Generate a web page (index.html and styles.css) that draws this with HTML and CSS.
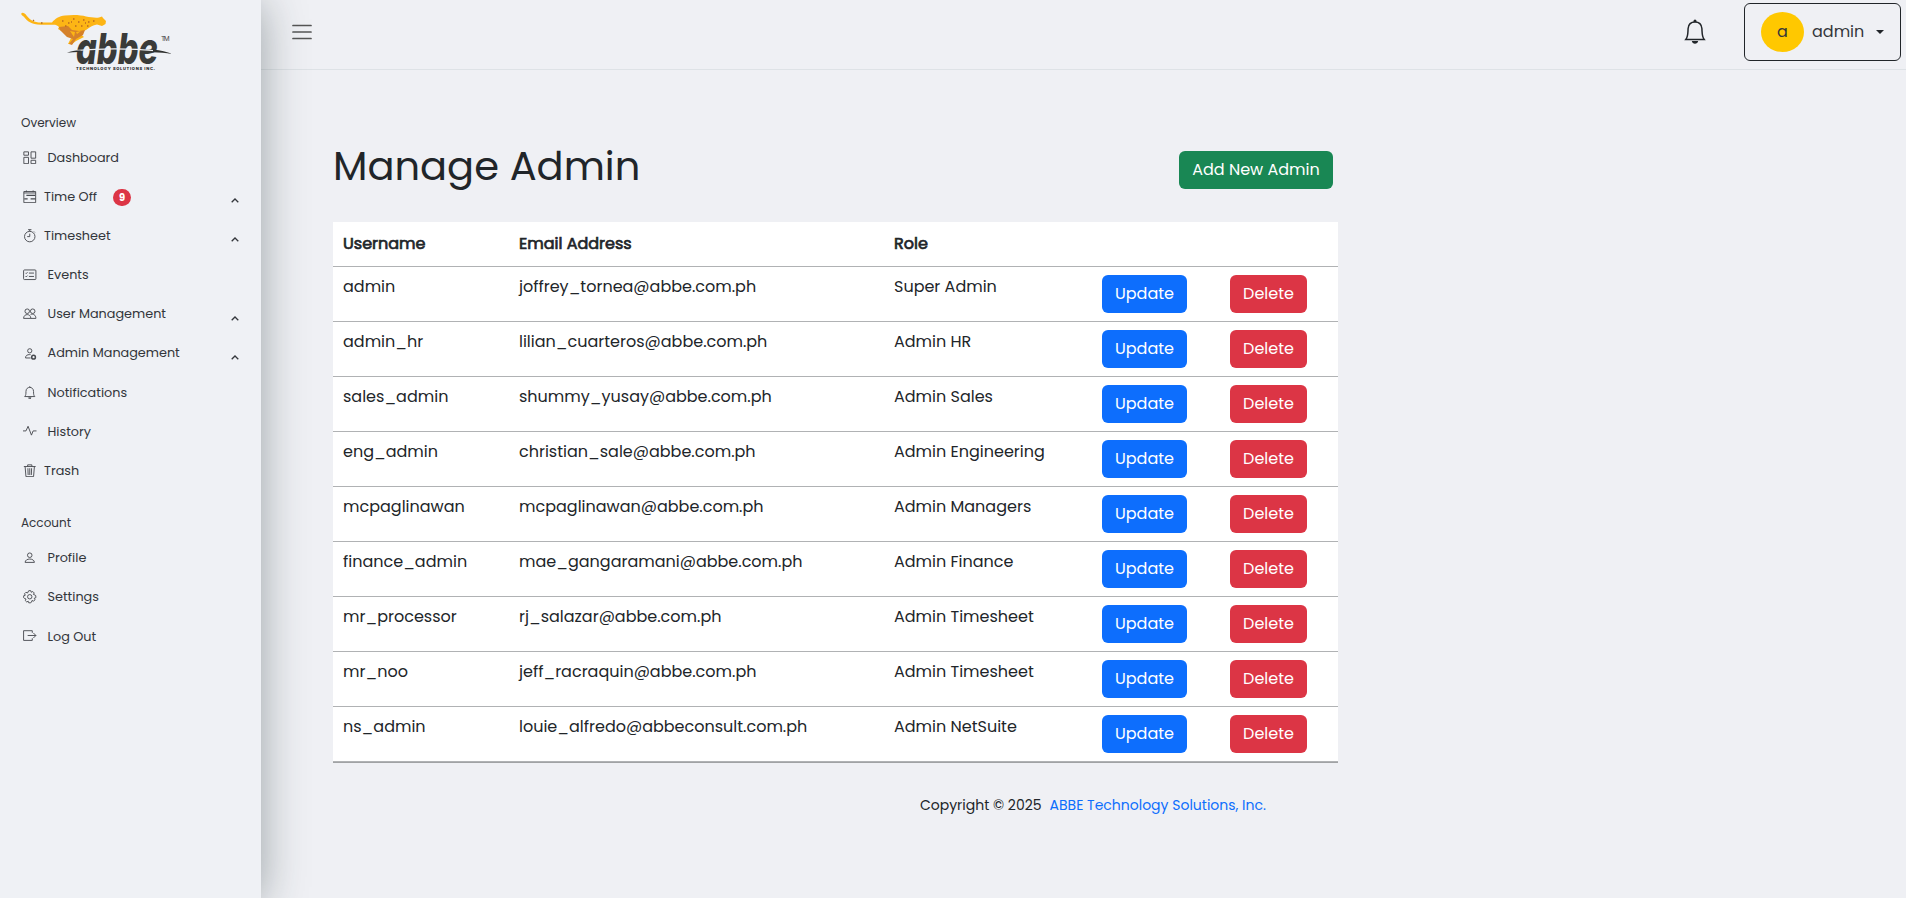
FILE: index.html
```html
<!DOCTYPE html>
<html lang="en">
<head>
<meta charset="utf-8">
<title>Manage Admin</title>
<link rel="stylesheet" href="styles.css">
</head>
<body>
<aside class="sidebar">
  <svg class="logo" viewBox="0 0 152 64" width="152" height="64">
    <path d="M.3 3.500C1 2 4 3 5.500 5.500C9 10 13 12.500 20 12.500H31C34 9 38 6 44 5.600C52 4.500 60 5 65 6.500C70 7.500 75 8 78 7.500L81 6.500L82 8L85 11L84.500 14L81 16L76 14.500C72 15 68 17.500 65 20L58 23L63 27L55 31L51 34L47 34L50 28L44 23L37 19L38 17C36 15 34 14.500 31 14.800H20C10 14.500 6 11 3.500 7.500C2 5.500 0 5.500 .3 3.500Z" fill="#fdb515"/>
    <path d="M38 17l9-1 4 4 7 1 6-1-2 5-7 4-4 6-3-1 4-5-6-2-7-7Z" fill="#d5812b"/>
    <path d="M49 21l5 1-1 5Zm6 1 5-1-4 3Z" fill="#fdb515"/>
    <path d="M41 11h1.500M47 13h1.500M52 9h1.500M57 12h1.500M62 10h1.500M67 12h1.500M60 16h1.500M54 16h1.500M44 16h1.500M66 16h1.500M72 11h1.500M50 12h1M64 13h1M20 13h1.500M12 10l1 1" stroke="#b96a22" stroke-width="1.300" fill="none"/>
    <text class="logo-word" x="55" y="53.500" textLength="82" lengthAdjust="spacingAndGlyphs">abbe</text>
    <path d="M54 40.500C85 38 112 38.500 138 41" stroke="#eff1f5" stroke-width="1.200" fill="none"/>
    <path d="M46 42.800C50 41 55 40.500 60 40.600L58 42C54 42 50 42.200 46 42.800ZM132 39.500C140 40.500 146 42 151 43.800C145 43.200 138 42.500 132 42.300Z" fill="#30312f"/>
    <text class="logo-tm" x="140" y="31" textLength="8.500">TM</text>
    <text class="logo-sub" x="55" y="60" textLength="79">TECHNOLOGY SOLUTIONS INC.</text>
  </svg>
  <h6 class="group">Overview</h6>
  <nav class="menu">
    <a class="item"><svg class="ico" viewBox="0 0 16 16"><path d="M1 1h5.500v4H1zM1 7.500h5.500V15H1zM9.500 1H15v7.500H9.500zM9.500 11H15v4H9.500z"/></svg><span>Dashboard</span></a>
    <a class="item near"><svg class="ico" viewBox="0 0 16 16"><path d="M1 1.800h14V15H1zM1 3.500h14M4 .5v2M12 .5v2"/><path d="M4 6.500h10.500M9 10.500h6M1.500 10.500h4" stroke-width="1.500"/></svg><span>Time Off</span><b class="badge">9</b><svg class="chev" viewBox="0 0 8 5"><path d="M.7 4.300 4 1l3.300 3.300"/></svg></a>
    <a class="item near"><svg class="ico" viewBox="0 0 16 16"><circle cx="8" cy="9" r="6.200"/><path d="M8 5.500V9H5M8 .8v2M6 .8h4M13 3l1 1"/></svg><span>Timesheet</span><svg class="chev" viewBox="0 0 8 5"><path d="M.7 4.300 4 1l3.300 3.300"/></svg></a>
    <a class="item"><svg class="ico" viewBox="0 0 16 16"><rect x=".7" y="2.300" width="14.600" height="11.400" rx="1"/><path d="M7 6h6M7 10h6M3 5.800l.8.8L5.300 5M3 9.800l.8.8L5.300 9"/></svg><span>Events</span></a>
    <a class="item"><svg class="ico" viewBox="0 0 16 16"><circle cx="5" cy="5" r="2.700"/><circle cx="11.500" cy="5" r="2.700"/><path d="M.7 13.500c0-6 8.600-6 8.600 0zM9 9c3-1.500 6.300.5 6.300 4.500h-6"/></svg><span>User Management</span><svg class="chev" viewBox="0 0 8 5"><path d="M.7 4.300 4 1l3.300 3.300"/></svg></a>
    <a class="item"><svg class="ico" viewBox="0 0 16 16"><circle cx="8" cy="4.500" r="2.500"/><path d="M9 13H3c0-3 2-4 5-4h1"/><circle cx="12.500" cy="12" r="2.200" stroke-width="1.800"/></svg><span>Admin Management</span><svg class="chev" viewBox="0 0 8 5"><path d="M.7 4.300 4 1l3.300 3.300"/></svg></a>
    <a class="item low"><svg class="ico" viewBox="0 0 16 16"><path d="M2 12.500c1.500-1.500 1.500-3 1.500-6 0-6.500 9-6.500 9 0 0 3 0 4.500 1.500 6zM8 .3v1.400"/><path d="M6.500 14h3L8 15.500z"/></svg><span>Notifications</span></a>
    <a class="item"><svg class="ico" viewBox="0 0 16 16"><path d="M0 7h3.500L6 1.500l4 10.500L12 7h4"/></svg><span>History</span></a>
    <a class="item near"><svg class="ico" viewBox="0 0 16 16"><path d="M1 3h14M5.500 3V1h5v2M2.500 3l1 12h9l1-12M5.800 5l.3 8M8 5v8M10.200 5l-.3 8"/></svg><span>Trash</span></a>
  </nav>
  <h6 class="group second">Account</h6>
  <nav class="menu">
    <a class="item"><svg class="ico" viewBox="0 0 16 16"><circle cx="8" cy="5" r="2.700"/><path d="M2.500 13.500c0-5.300 11-5.300 11 0z"/></svg><span>Profile</span></a>
    <a class="item"><svg class="ico" viewBox="0 0 16 16"><path d="M6.800.8h2.400l.6 1.900 1.800-.9 1.700 1.700-.9 1.800 1.900.7.900.8v2.400l-1.900.6.9 1.800-1.700 1.700-1.800-.9-.7 1.900-.8.900H6.800l-.6-1.900-1.800.9-1.700-1.700.9-1.800-1.900-.7-.9-.8V6.800l1.900-.6-.9-1.800 1.700-1.700 1.800.9z"/><circle cx="8" cy="8" r="2.600"/></svg><span>Settings</span></a>
    <a class="item low"><svg class="ico" viewBox="0 0 16 16"><path d="M11 4.500V2H.700v11.500H11V11M5.500 7.700h9.800M12.300 4.700l3 3-3 3"/></svg><span>Log Out</span></a>
  </nav>
</aside>
<div class="page">
  <header class="topbar">
    <svg class="burger" viewBox="0 0 20 16" width="20" height="16"><path d="M1 1.500h18M1 8h18M1 14.500h18"/></svg>
    <svg class="bell" viewBox="0 0 22 26" width="22" height="26"><path d="M1.800 20.500H20.200C17.800 17.500 18.200 14 17.900 9.500 17.500 5 14.500 3 11 3S4.500 5 4.100 9.500C3.800 14 4.200 17.500 1.800 20.500Z"/><path class="fill" d="M9.500 2a1.500 1.500 0 0 1 3 0v1h-3zM7.800 22h6.400c-.6 3.600-5.800 3.600-6.400 0Z"/></svg>
    <div class="account"><span class="avatar">a</span><span class="account-name">admin</span><i class="caret"></i></div>
  </header>
  <main class="content">
    <div class="title-row"><h1>Manage Admin</h1><a class="btn add">Add New Admin</a></div>
    <table class="admins">
      <colgroup><col class="c1"><col class="c2"><col class="c3"><col class="c4"><col class="c5"></colgroup>
      <thead><tr><th>Username</th><th>Email Address</th><th>Role</th><th></th><th></th></tr></thead>
      <tbody>
      <tr><td>admin</td><td>joffrey_tornea@abbe.com.ph</td><td>Super Admin</td><td><a class="btn update">Update</a></td><td><a class="btn delete">Delete</a></td></tr>
      <tr><td>admin_hr</td><td>lilian_cuarteros@abbe.com.ph</td><td>Admin HR</td><td><a class="btn update">Update</a></td><td><a class="btn delete">Delete</a></td></tr>
      <tr><td>sales_admin</td><td>shummy_yusay@abbe.com.ph</td><td>Admin Sales</td><td><a class="btn update">Update</a></td><td><a class="btn delete">Delete</a></td></tr>
      <tr><td>eng_admin</td><td>christian_sale@abbe.com.ph</td><td>Admin Engineering</td><td><a class="btn update">Update</a></td><td><a class="btn delete">Delete</a></td></tr>
      <tr><td>mcpaglinawan</td><td>mcpaglinawan@abbe.com.ph</td><td>Admin Managers</td><td><a class="btn update">Update</a></td><td><a class="btn delete">Delete</a></td></tr>
      <tr><td>finance_admin</td><td>mae_gangaramani@abbe.com.ph</td><td>Admin Finance</td><td><a class="btn update">Update</a></td><td><a class="btn delete">Delete</a></td></tr>
      <tr><td>mr_processor</td><td>rj_salazar@abbe.com.ph</td><td>Admin Timesheet</td><td><a class="btn update">Update</a></td><td><a class="btn delete">Delete</a></td></tr>
      <tr><td>mr_noo</td><td>jeff_racraquin@abbe.com.ph</td><td>Admin Timesheet</td><td><a class="btn update">Update</a></td><td><a class="btn delete">Delete</a></td></tr>
      <tr><td>ns_admin</td><td>louie_alfredo@abbeconsult.com.ph</td><td>Admin NetSuite</td><td><a class="btn update">Update</a></td><td><a class="btn delete">Delete</a></td></tr>
      </tbody>
    </table>
    <footer class="foot"><span>Copyright © 2025</span><a>ABBE Technology Solutions, Inc.</a></footer>
  </main>
</div>
</body>
</html>
```
FILE: styles.css
```css
* { box-sizing: border-box; }
body {
  margin: 0;
  height: 898px;
  display: flex;
  overflow: hidden;
  background: #eff0f4;
  color: #212529;
  font: 16px/24px Poppins, Inter, sans-serif;
}
h1, h6 { margin: 0; font-weight: 400; }

.sidebar {
  position: relative;
  z-index: 1;
  flex: 0 0 261px;
  padding: 10px 21px 0;
  background: #eff1f5;
  box-shadow: 0 4px 42px rgba(35, 52, 56, .42);
  color: #33363b;
  font-size: 12.8px;
}
.logo { display: block; overflow: visible; }
.logo-word { font: italic 800 43px Inter, sans-serif; fill: #3a3b39; }
.logo-tm { font: 6.500px Inter, sans-serif; fill: #444; }
.logo-sub { font: 800 4px Inter, sans-serif; fill: #222; }
.group { margin-top: 36px; font-size: 12px; line-height: 26px; }
.group.second { margin-top: 20px; }
.menu { padding-top: 2px; }
.item { display: flex; align-items: center; height: 39.15px; padding-left: 2px; white-space: nowrap; }
.item > span { margin-left: 11px; }
.item.near > span { margin-left: 7.500px; }
.item.low > span { padding-top: 1px; }
.ico { width: 13.500px; height: 13.500px; fill: none; stroke: #484b50; stroke-width: 1.1; }
.chev { width: 8px; height: 5px; margin: 8px 1px 0 auto; fill: none; stroke: #33363b; stroke-width: 1.3; }
.badge { width: 18px; height: 17px; margin: 2px 0 0 16px; border-radius: 9px; background: #dc3545; color: #fff; font-size: 10px; line-height: 17px; text-align: center; }

.page { flex: 1; min-width: 0; }
.topbar { display: flex; align-items: center; height: 70px; padding: 0 5px 6px 31px; border-bottom: 1px solid #dee2e6; }
.burger { fill: none; stroke: #555; stroke-width: 1.7; stroke-linecap: round; }
.bell { margin-left: auto; fill: none; stroke: #212529; stroke-width: 1.5; }
.bell .fill { fill: #212529; stroke: none; }
.account { display: flex; align-items: center; width: 157px; height: 58px; margin-left: 38px; padding-left: 16px; border: 1px solid #212529; border-radius: 6px; color: #33363b; }
.avatar { width: 43px; height: 40px; border-radius: 50%; background: #ffc800; line-height: 40px; text-align: center; }
.account-name { width: 52px; margin-left: 8px; }
.caret { margin-left: 12px; border: 4px solid transparent; border-top-color: #212529; border-bottom: 0; }

.content { padding: 72px 0 0 72px; }
.title-row { display: flex; justify-content: space-between; width: 1000px; height: 80px; }
h1 { font-size: 40px; line-height: 48px; }
.btn { display: inline-block; height: 38px; border-radius: 6px; color: #fff; line-height: 38px; text-align: center; }
.add { width: 154px; margin-top: 9px; background: #198754; }
.update { width: 85px; background: #0d6efd; }
.delete { width: 77px; background: #dc3545; }
.admins { width: 1005px; table-layout: fixed; border-collapse: separate; border-spacing: 0; background: #fff; border-bottom: 1px solid #a0a2a4; }
.c1 { width: 176px; } .c2 { width: 375px; } .c3 { width: 210px; } .c4 { width: 128px; } .c5 { width: 116px; }
th, td { padding: 8px 8px 8px 10px; border-bottom: 1px solid #b0b2b4; text-align: left; vertical-align: top; white-space: nowrap; }
td:nth-child(n+4) { padding-left: 8px; }
th { height: 45px; padding-top: 10px; font-weight: 400; -webkit-text-stroke: .7px #212529; }
td { height: 55px; }
.foot { display: flex; gap: 8px; padding: 30px 0 0 587px; font-size: 14px; }
.foot a { color: #0d6efd; }
```
